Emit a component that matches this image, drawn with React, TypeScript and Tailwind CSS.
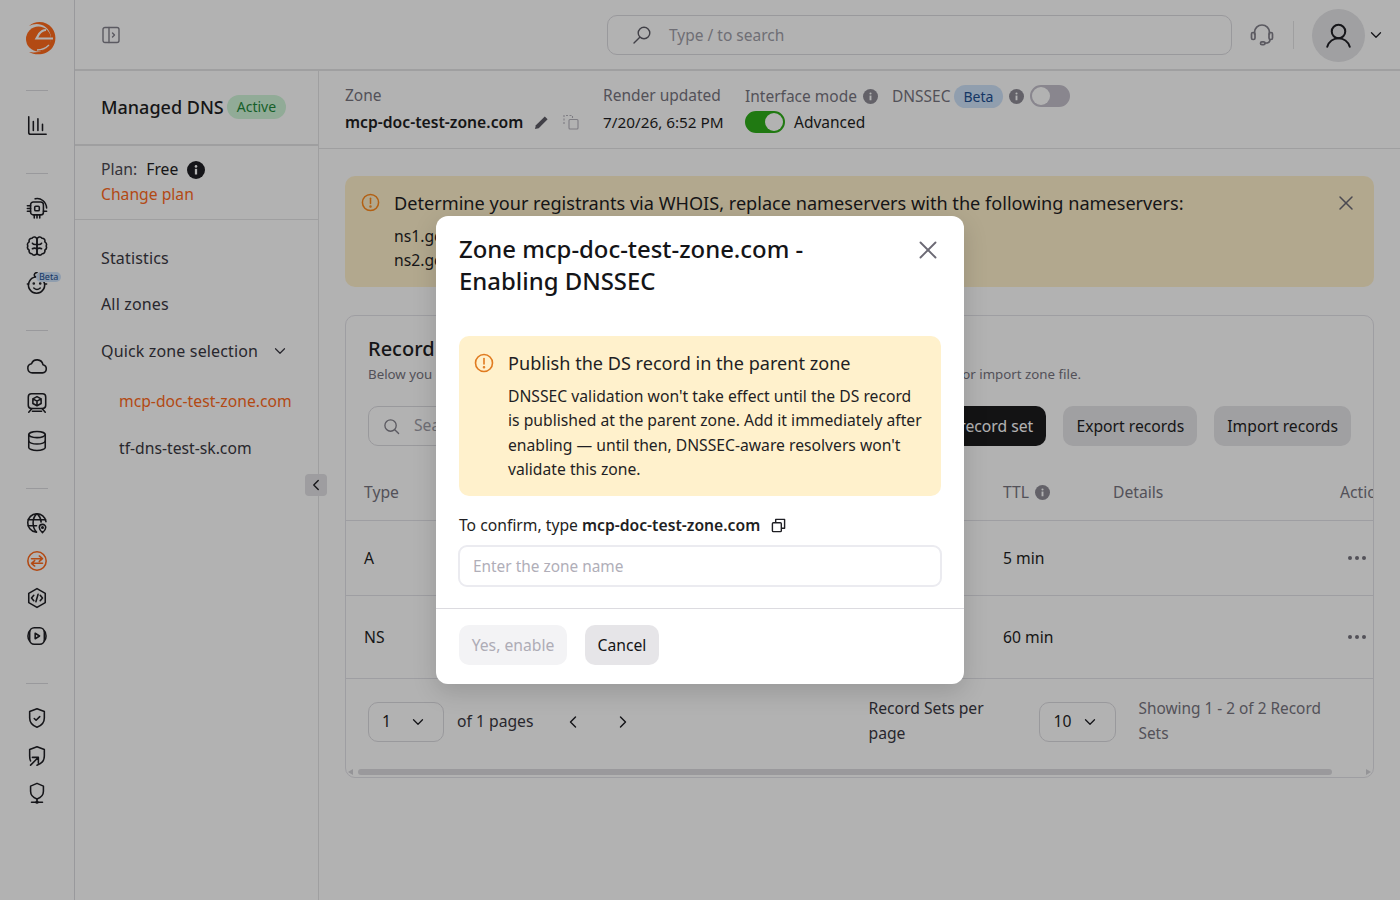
import * as React from 'react';
import { X, ChevronDown, ChevronLeft, ChevronRight } from 'lucide-react';

// line icons for the left rail, drawn on a 24 grid
const railIcons: Record<string, React.ReactNode> = {
  chart: (
    <>
      <path d="M3 2v17a2 2 0 0 0 2 2h17" />
      <path d="M8 7v10M13 4v13M18 10v7" />
    </>
  ),
  chip: (
    <>
      <rect x="5" y="5.500" width="14" height="14" rx="3" />
      <rect x="9.500" y="10" width="5" height="5" rx="1.200" />
      <path d="M1.500 9.500H5M1.500 12.500H5M1.500 15.500H5M9 19.500V23M12 19.500V23M15 19.500V23M19 15.500h3.500" />
      <path d="M10 2c6-1.500 12 3 12.500 10" />
    </>
  ),
  brain: (
    <>
      <path d="M12 5a3 3 0 0 0-5.500-1.500A3 3 0 0 0 3.500 7.500 3.500 3.500 0 0 0 2 12a3.500 3.500 0 0 0 1.500 4.500 3 3 0 0 0 3 4 3 3 0 0 0 5.500-1z" />
      <path d="M12 5a3 3 0 0 1 5.500-1.500 3 3 0 0 1 3 4A3.500 3.500 0 0 1 22 12a3.500 3.500 0 0 1-1.500 4.500 3 3 0 0 1-3 4 3 3 0 0 1-5.500-1z" />
      <path d="M7 9c1 1.500 3 1.500 5 1M7 15c1.500-1 3-1 5 0M17 9c-1 1.500-3 1.500-5 1M17 15c-1.500-1-3-1-5 0" />
    </>
  ),
  baby: (
    <>
      <path d="M12 5.500a8.800 8.800 0 1 1-1 0c-3-1-2.500-4.500 1-5" />
      <path d="M1.500 13H3M21 13h1.500" />
      <path d="M8.500 17.500c2 1.800 5 1.800 7 0" />
      <circle cx="8.500" cy="12.500" r=".6" fill="currentColor" />
      <circle cx="15.500" cy="12.500" r=".6" fill="currentColor" />
    </>
  ),
  cloud: <path d="M7 19.500a5 5 0 0 1-1-9.900 6.500 6.500 0 0 1 12.500 1A4.500 4.500 0 0 1 18 19.500z" />,
  box: (
    <>
      <rect x="2.500" y="2" width="19" height="16" rx="3.500" />
      <path d="M12 5 16.500 7.500v5L12 15l-4.500-2.500v-5zM7.500 7.500 12 10l4.500-2.500M12 10v5" />
      <path d="M6.500 18 3 22M17.500 18l3.500 4M7 21h10" />
    </>
  ),
  database: (
    <>
      <ellipse cx="12" cy="5" rx="9" ry="3.300" />
      <path d="M3 5v14c0 1.800 4 3.300 9 3.300s9-1.500 9-3.300V5" />
      <path d="M3 12c0 1.800 4 3.300 9 3.300s9-1.500 9-3.300" />
    </>
  ),
  globe: (
    <>
      <path d="M21.800 10.500A10 10 0 1 0 10.500 21.800" />
      <path d="M2.500 8.500h19M2.500 15h9M11.500 2c-5 5-5 15 0 20M12.500 2c2.500 2.500 3.800 5.500 4 9" />
      <path d="M18 22.500s-3.500-2.800-3.500-5.500a3.500 3.500 0 0 1 7 0c0 2.700-3.500 5.500-3.500 5.500z" />
      <circle cx="18" cy="17" r=".8" />
    </>
  ),
  swap: (
    <>
      <circle cx="12" cy="12" r="10" />
      <path d="M6 9.500h12M14.500 6.500l3.500 3-3.500 3M18 14.500H6M9.500 11.500l-3.500 3 3.500 3" />
    </>
  ),
  code: (
    <>
      <path d="M12 1.800 21 7v10l-9 5.200L3 17V7z" />
      <path d="M8.500 9 6 12l2.500 3M15.500 9 18 12l-2.500 3M13.200 8l-2.400 8" />
    </>
  ),
  video: (
    <>
      <rect x="4" y="3" width="16" height="18" rx="5" />
      <path d="M4 6.500C1.500 8.500 1.500 15.500 4 17.500M20 6.500c2.500 2 2.500 9 0 11" />
      <path d="M10 9v6l4.800-3z" />
    </>
  ),
  shield: (
    <>
      <path d="M12 2 4 5v7c0 5 3.500 8.500 8 10 4.500-1.500 8-5 8-10V5z" />
      <path d="m9 12.500 2 2 4-4" />
    </>
  ),
  shieldArrow: (
    <>
      <path d="M5 17.500C4.300 16 4 14 4 12V5l8-3 8 3v7c0 5-3.500 8.500-8 10" />
      <path d="m5 22 7.500-7.500M7 13.500h6.500V20" />
    </>
  ),
  pin: (
    <>
      <path d="M12 1.500 5 4.500V10c0 4 3 7 7 8.500 4-1.500 7-4.500 7-8.500V4.500z" />
      <path d="M12 18.500V21M6 22h12" />
      <circle cx="12" cy="22" r="1" />
    </>
  ),
};

function RailIcon({ name, active, badge }: { name: string; active?: boolean; badge?: boolean }) {
  return (
    <div className={`relative flex h-[37.5px] w-full items-center justify-center ${active ? 'text-[#ff6a1c]' : 'text-[#1f1f24]'}`}>
      <svg viewBox="0 0 24 24" className="h-[22px] w-[22px]" fill="none" stroke="currentColor" strokeWidth="1.700" strokeLinecap="round" strokeLinejoin="round">
        {railIcons[name]}
      </svg>
      {badge && (
        <span className="absolute left-[36px] top-[7px] rounded-full bg-[#cfe2fa] px-[3px] text-[9px] leading-[10px] text-[#1d4f91]">Beta</span>
      )}
    </div>
  );
}

function RailGroup({ names, activeName, badgeName }: { names: string[]; activeName?: string; badgeName?: string }) {
  return (
    <div className="flex w-full flex-col items-center pb-[28px]">
      <div className="mb-[16px] h-px w-[22px] bg-[#dcdce0]" />
      {names.map((n) => (
        <RailIcon key={n} name={n} active={n === activeName} badge={n === badgeName} />
      ))}
    </div>
  );
}

function InfoDot({ size = 'h-[15px] w-[15px]', color = 'text-[#8e8c96]' }: { size?: string; color?: string }) {
  return (
    <svg viewBox="0 0 16 16" className={`${size} ${color} shrink-0`}>
      <circle cx="8" cy="8" r="8" fill="currentColor" />
      <rect x="7" y="7" width="2" height="5" fill="#ffffff" />
      <circle cx="8" cy="4.800" r="1.150" fill="#ffffff" />
    </svg>
  );
}

function Toggle({ on }: { on?: boolean }) {
  return (
    <div className={`flex h-[22px] w-[40px] items-center rounded-full border-2 ${on ? 'justify-end border-[#2fae1a] bg-[#2fae1a]' : 'justify-start border-[#c4c0cc] bg-[#c4c0cc]'}`}>
      <div className="h-[18px] w-[18px] rounded-full bg-white" />
    </div>
  );
}

function WarnIcon({ className }: { className: string }) {
  return (
    <svg viewBox="0 0 20 20" className={className} fill="none" stroke="currentColor" strokeWidth="1.600" strokeLinecap="round">
      <circle cx="10" cy="10" r="8.500" />
      <path d="M10 5.500v5.500" />
      <circle cx="10" cy="14.300" r=".5" fill="currentColor" />
    </svg>
  );
}

function CopyIcon({ className }: { className: string }) {
  return (
    <svg viewBox="0 0 16 16" className={className} fill="none" stroke="currentColor" strokeWidth="1.500" strokeLinejoin="round">
      <rect x="1.500" y="5" width="9.500" height="9.500" rx="1" />
      <path d="M5 5V1.500h9.500V11H11" />
    </svg>
  );
}

function MagnifierIcon({ className }: { className: string }) {
  return (
    <svg viewBox="0 0 20 20" className={className} fill="none" stroke="currentColor" strokeWidth="1.400" strokeLinecap="round">
      <circle cx="12" cy="8" r="5.800" />
      <path d="M7.800 12.200 2 18" />
    </svg>
  );
}

function Dots() {
  return (
    <svg viewBox="0 0 20 6" className="ml-[7px] h-[6px] w-[20px] text-[#77757f]" fill="currentColor">
      <circle cx="3" cy="3" r="2" />
      <circle cx="10" cy="3" r="2" />
      <circle cx="17" cy="3" r="2" />
    </svg>
  );
}

function SelectBox({ value, width }: { value: string; width: string }) {
  return (
    <div className={`flex h-[40px] items-center justify-between rounded-[10px] border border-[#dcdbe0] pl-[13px] pr-[16px] text-[15.700px] text-[#1f1f24] ${width}`}>
      <span>{value}</span>
      <ChevronDown size={18} strokeWidth={1.700} />
    </div>
  );
}

function TableRow({ type, ttl, height }: { type: string; ttl: string; height: string }) {
  return (
    <div className={`grid grid-cols-[639px_110px_227px_auto] items-center border-b border-[#e3e2e8] pl-[18px] text-[15.700px] text-[#1f1f24] ${height}`}>
      <span className="pt-[2px]">{type}</span>
      <span className="pt-[2px]">{ttl}</span>
      <span />
      <Dots />
    </div>
  );
}

export default function App() {
  return (
    <div className="relative flex h-[900px] w-full overflow-hidden bg-white font-['Noto_Sans',sans-serif] text-[#1f1f24]">
      {/* Left rail */}
      <aside className="flex w-[75px] shrink-0 flex-col items-center border-r border-[#dcdce0]">
        <div className="flex h-[90px] w-full items-start justify-center pl-[5px] pt-[18px]">
          <svg viewBox="0 0 40 40" className="h-[40px] w-[40px]">
            <circle cx="18.500" cy="21" r="12.500" fill="#ff6a1c" />
            <path d="M9 8C15 2.500 26 2.500 32 10c4.500 6 4.500 14 .5 19.500C27 37 16 38 9 34c8 1.500 17-1 20.500-8 3-6.500 1-13-4-17C20 5 14 5.500 9 8z" fill="#ff6a1c" />
            <path d="M26 12c-3 0-5 1.500-7 4l-2.500 4.500H33" fill="none" stroke="#ffffff" strokeWidth="2.200" />
            <path d="M29 27c-3 3-7 5-12 5" fill="none" stroke="#ffffff" strokeWidth="1.300" />
          </svg>
        </div>
        <RailGroup names={['chart']} />
        <RailGroup names={['chip', 'brain', 'baby']} badgeName="baby" />
        <RailGroup names={['cloud', 'box', 'database']} />
        <RailGroup names={['globe', 'swap', 'code', 'video']} activeName="swap" />
        <RailGroup names={['shield', 'shieldArrow', 'pin']} />
      </aside>

      <div className="flex min-w-0 flex-1 flex-col">
        {/* Top bar */}
        <header className="flex h-[71px] shrink-0 items-center border-b-2 border-[#e4e4e6]">
          <svg viewBox="0 0 18 18" className="ml-[27px] h-[18px] w-[18px] text-[#83818b]" fill="none" stroke="currentColor" strokeWidth="1.400" strokeLinejoin="round" strokeLinecap="round">
            <rect x="1" y="1.500" width="16" height="15" rx="2" />
            <path d="M7 1.500v15M10.500 7l2 2-2 2" />
          </svg>
          <div className="ml-[487px] flex h-[40px] w-[625px] items-center rounded-[10px] border border-[#dcdbe0] pl-[24px] text-[15.500px] text-[#a09ea8]">
            <MagnifierIcon className="h-[20px] w-[20px] text-[#5e5c66]" />
            <span className="ml-[17px] pt-[3px]">Type / to search</span>
          </div>
          <svg viewBox="0 0 24 24" className="ml-[18px] h-[24px] w-[24px] text-[#83818b]" fill="none" stroke="currentColor" strokeWidth="1.700" strokeLinecap="round">
            <path d="M4.500 11V9.500a7.500 7.500 0 0 1 15 0V11" />
            <rect x="1.500" y="9.500" width="3.500" height="7" rx="1.500" />
            <rect x="19" y="9.500" width="3.500" height="7" rx="1.500" />
            <path d="M20 16.500c0 2.500-2 3.700-5 3.700" />
            <rect x="10.500" y="18.800" width="4.500" height="2.800" rx="1.400" />
          </svg>
          <div className="ml-[19px] h-[28px] w-px bg-[#e4e4e6]" />
          <div className="ml-[18px] mt-[2px] flex h-[53px] w-[53px] items-center justify-center rounded-full bg-[#e5e5e8]">
            <svg viewBox="0 0 24 24" className="h-[27px] w-[27px] text-[#1f1f24]" fill="none" stroke="currentColor" strokeWidth="1.800" strokeLinecap="round">
              <circle cx="12" cy="8.500" r="6" />
              <path d="M2 22c1.500-4.500 5.500-7.500 10-7.500S20.500 17.500 22 22" />
            </svg>
          </div>
          <ChevronDown size={18} strokeWidth={1.700} className="ml-[2px] mt-[1px] text-[#1f1f24]" />
        </header>

        <div className="flex min-h-0 flex-1">
          {/* Section sidebar */}
          <aside className="relative w-[244px] shrink-0 border-r border-[#e4e4e6]">
            <div className="flex h-[75px] items-center border-b-2 border-[#e4e4e6] pb-[1px] pl-[26px]">
              <span className="text-[18px] font-medium">Managed DNS</span>
              <span className="ml-[3px] rounded-full bg-[#d0f5d8] px-[10px] text-[14px] leading-[24px] text-[#1f8a3c]">Active</span>
            </div>
            <div className="h-[74px] border-b border-[#e4e4e6] pl-[26px] pt-[11px] text-[15.700px] leading-[25px]">
              <div className="flex items-center">
                <span className="text-[#4c4a54]">Plan:</span>
                <span className="ml-[9px]">Free</span>
                <InfoDot size="h-[18px] w-[18px] ml-[9px]" color="text-[#1f1f24]" />
              </div>
              <div className="text-[#ff6a1c]">Change plan</div>
            </div>
            <nav className="pl-[26px] pt-[15px] text-[16px] tracking-[0.15px]">
              <div className="flex h-[46px] items-center text-[#3a3842]">Statistics</div>
              <div className="flex h-[46px] items-center text-[#3a3842]">All zones</div>
              <div className="flex h-[48px] items-center text-[#3a3842]">
                Quick zone selection
                <ChevronDown size={18} strokeWidth={1.600} className="ml-[13px]" />
              </div>
              <div className="flex h-[54px] items-center pl-[18px] text-[15.700px] tracking-normal text-[#ff6a1c]">mcp-doc-test-zone.com</div>
              <div className="flex h-[40px] items-center pl-[18px] text-[15.700px] tracking-normal text-[#3a3842]">tf-dns-test-sk.com</div>
            </nav>
            <div className="absolute left-[230px] top-[403px] flex h-[22px] w-[22px] items-center justify-center rounded-[4px] bg-[#e2e1e5]">
              <ChevronLeft size={18} strokeWidth={1.800} />
            </div>
          </aside>

          <main className="min-w-0 flex-1">
            {/* Zone summary */}
            <div className="flex h-[78px] items-start border-b border-[#e4e4e6] pl-[26px] pt-[11px] text-[15.500px] leading-[26px]">
              <div className="w-[258px]">
                <div className="text-[#77757f]">Zone</div>
                <div className="mt-[1px] flex items-center text-[15.700px] font-semibold">
                  mcp-doc-test-zone.com
                  <svg viewBox="0 0 16 16" className="ml-[11px] h-[15px] w-[15px] text-[#5e5c66]" fill="currentColor">
                    <path d="M11.500 1.500 14.500 4.500 5 14 1 15l1-4z" />
                  </svg>
                  <svg viewBox="0 0 16 16" className="ml-[14px] h-[16px] w-[16px] text-[#b5b3bc]" fill="none" stroke="currentColor" strokeWidth="1.100">
                    <path d="M1 10V1.500h8.500V4" strokeDasharray="2 1.500" />
                    <rect x="6" y="5.500" width="9" height="9.500" rx="1" />
                  </svg>
                </div>
              </div>
              <div className="w-[142px]">
                <div className="text-[#77757f]">Render updated</div>
                <div className="mt-[1px] text-[15.300px]">7/20/26, 6:52 PM</div>
              </div>
              <div className="pt-[1px]">
                <div className="flex items-center text-[#77757f]">
                  Interface mode
                  <span className="ml-[6px]"><InfoDot /></span>
                  <span className="ml-[14px]">DNSSEC</span>
                  <span className="ml-[3px] rounded-full bg-[#cfe2fa] px-[10px] text-[14px] leading-[23px] text-[#1d4f91]">Beta</span>
                  <span className="ml-[6px]"><InfoDot /></span>
                  <span className="ml-[6px]"><Toggle /></span>
                </div>
                <div className="flex items-center">
                  <Toggle on />
                  <span className="ml-[9px]">Advanced</span>
                </div>
              </div>
            </div>

            <div className="px-[26px] pt-[27px]">
              {/* Nameserver notice */}
              <div className="flex h-[111px] rounded-[10px] bg-[#fff1cc] pl-[16px] pr-[16px] pt-[14px]">
                <WarnIcon className="mt-[3px] h-[19px] w-[19px] shrink-0 text-[#ff8a1c]" />
                <div className="ml-[14px] flex-1">
                  <div className="text-[18.140px] leading-[26px]">Determine your registrants via WHOIS, replace nameservers with the following nameservers:</div>
                  <div className="mt-[8px] text-[15.700px] leading-[24px]">ns1.gcore.com</div>
                  <div className="text-[15.700px] leading-[24px]">ns2.gcore.com</div>
                </div>
                <X size={24} strokeWidth={1.500} className="mt-[1px] text-[#6b6974]" />
              </div>

              {/* Record sets card */}
              <section className="mt-[28px] overflow-hidden rounded-[10px] border border-[#e3e2e8]">
                <div className="px-[22px] pt-[19px]">
                  <h2 className="text-[20px] leading-[27px] font-medium">Record Sets</h2>
                  <div className="mt-[1px] flex justify-between text-[13.300px] leading-[23px] text-[#77757f]">
                    <span>Below you can manage</span>
                    <span className="mr-[270px]">or import zone file.</span>
                  </div>
                  <div className="mt-[20px] flex items-center">
                    <div className="flex h-[40px] w-[300px] items-center rounded-[10px] border border-[#dcdbe0] pl-[14px] text-[15.700px] text-[#a09ea8]">
                      <svg viewBox="0 0 18 18" className="h-[17px] w-[17px] text-[#83818b]" fill="none" stroke="currentColor" strokeWidth="1.400" strokeLinecap="round">
                        <circle cx="8" cy="8" r="6" />
                        <path d="m12.500 12.500 4 4" />
                      </svg>
                      <span className="ml-[14px]">Search</span>
                    </div>
                    <button className="ml-auto h-[40px] rounded-[10px] bg-[#1c1c1e] px-[13px] pt-[1px] text-[15.700px] text-white">Add record set</button>
                    <button className="ml-[17px] h-[40px] w-[134px] rounded-[10px] bg-[#e6e5e8] pt-[1px] text-[15.700px]">Export records</button>
                    <button className="ml-[17px] h-[40px] rounded-[10px] bg-[#e6e5e8] px-[13px] pt-[1px] text-[15.700px]">Import records</button>
                  </div>
                </div>

                <div className="mt-[19px] grid h-[56px] grid-cols-[639px_110px_227px_auto] items-center border-b border-[#e3e2e8] pl-[18px] text-[15.700px] whitespace-nowrap text-[#77757f]">
                  <span>Type</span>
                  <span className="flex items-center gap-[6px]">TTL <InfoDot /></span>
                  <span>Details</span>
                  <span>Actions</span>
                </div>
                <TableRow type="A" ttl="5 min" height="h-[75px]" />
                <TableRow type="NS" ttl="60 min" height="h-[83px]" />

                {/* Pagination */}
                <div className="flex h-[85px] items-center pl-[22px] text-[15.700px]">
                  <SelectBox value="1" width="w-[76px]" />
                  <span className="ml-[13px] text-[#3a3842]">of 1 pages</span>
                  <ChevronLeft size={20} strokeWidth={1.700} className="ml-[30px]" />
                  <ChevronRight size={20} strokeWidth={1.700} className="ml-[30px]" />
                  <span className="mb-[2px] ml-[235px] w-[130px] leading-[25px] text-[#3a3842]">Record Sets per page</span>
                  <span className="ml-[41px]"><SelectBox value="10" width="w-[77px]" /></span>
                  <span className="mb-[2px] ml-[22px] w-[200px] text-[15.400px] leading-[25px] text-[#77757f]">Showing 1 - 2 of 2 Record Sets</span>
                </div>
                <div className="flex h-[13px] items-end pb-[2px] pl-[2px] pr-[2px]">
                  <svg viewBox="0 0 5 6" className="h-[6px] w-[5px] text-[#d5d4d9]" fill="currentColor"><path d="M5 0v6L0 3z" />
                  </svg>
                  <div className="ml-[5px] h-[6px] w-[974px] rounded-full bg-[#dddce0]" />
                  <svg viewBox="0 0 5 6" className="ml-auto h-[6px] w-[5px] text-[#d5d4d9]" fill="currentColor"><path d="M0 0v6l5-3z" />
                  </svg>
                </div>
              </section>
            </div>
          </main>
        </div>
      </div>

      {/* Dialog */}
      <div className="absolute inset-0 flex items-center justify-center bg-black/30">
        <div className="h-[468px] w-[528px] rounded-[12px] bg-white shadow-[0_8px_24px_rgba(0,0,0,0.15)]">
          <div className="flex h-[81px] items-start justify-between px-[23px] pt-[17px]">
            <h1 className="w-[400px] text-[23.900px] leading-[32px] font-medium text-[#141417]">Zone mcp-doc-test-zone.com - Enabling DNSSEC</h1>
            <X size={30} strokeWidth={1.500} className="mr-[-2px] mt-[2px] shrink-0 text-[#6b6974]" />
          </div>
          <div className="mx-[23px] mt-[39px] flex h-[160px] rounded-[10px] bg-[#fff1cc] pl-[15px] pt-[14px]">
            <WarnIcon className="mt-[3px] h-[20px] w-[20px] shrink-0 text-[#e07b20]" />
            <div className="ml-[14px] w-[417px]">
              <div className="text-[18.100px] leading-[26px]">Publish the DS record in the parent zone</div>
              <p className="mt-[8px] text-[15.700px] leading-[24.400px]">DNSSEC validation won't take effect until the DS record is published at the parent zone. Add it immediately after enabling — until then, DNSSEC-aware resolvers won't validate this zone.</p>
            </div>
          </div>
          <div className="mx-[23px] mt-[19px] flex items-center text-[15.700px] leading-[20px]">
            To confirm, type <span className="ml-[4px] font-semibold">mcp-doc-test-zone.com</span>
            <CopyIcon className="ml-[11px] h-[15px] w-[15px]" />
          </div>
          <div className="mx-[22px] mt-[10px] flex h-[42px] items-center rounded-[9px] border-2 border-[#ebebf0] pl-[13px] pt-[2px] text-[15.400px] text-[#b0aeb8]">Enter the zone name</div>
          <div className="mt-[21px] flex h-[76px] items-start gap-[18px] border-t border-[#dcdbe0] px-[23px] pt-[16px]">
            <button className="h-[40px] w-[108px] rounded-[10px] bg-[#f3f3f5] pt-[2px] text-[15.700px] text-[#aeacb6]">Yes, enable</button>
            <button className="h-[40px] w-[74px] rounded-[10px] bg-[#e6e5e8] pt-[2px] text-[15.700px] text-[#141417]">Cancel</button>
          </div>
        </div>
      </div>
    </div>
  );
}
